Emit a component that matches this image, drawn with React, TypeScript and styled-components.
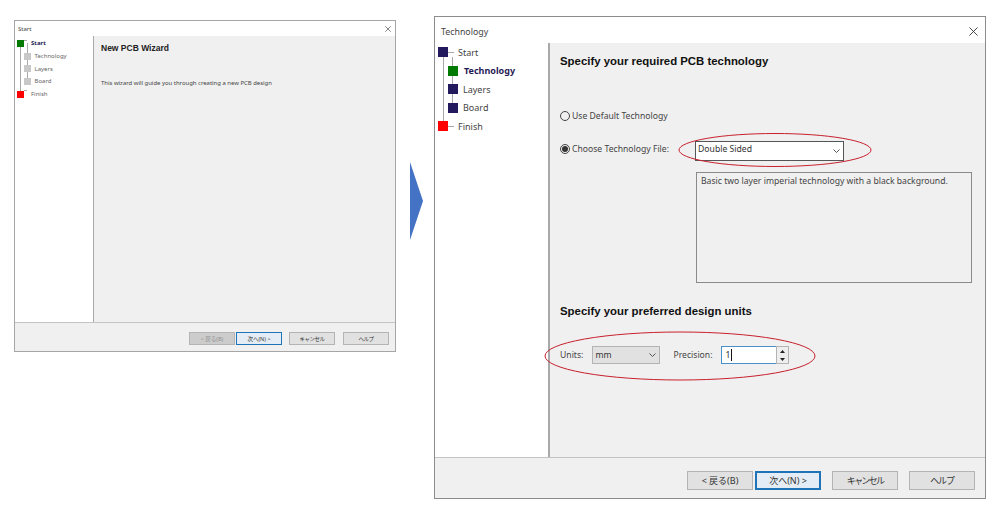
import React from "react";
import styled, { createGlobalStyle } from "styled-components";

const Global = createGlobalStyle`
  html, body { margin: 0; padding: 0; background: #fff; }
  body { font-family: "Noto Sans", "Noto Sans CJK JP", sans-serif; color: #222; }
  #root { width: 1002px; height: 517px; overflow: hidden; }
`;

const Page = styled.div`
  display: flex;
  align-items: flex-start;
  padding: 16px 0 0 14px;
  width: 1002px;
  height: 517px;
  box-sizing: border-box;
`;

const Window = styled.div<{ $w: number; $h: number; $mt: number; $ml: number; $color: string }>`
  position: relative;
  display: flex;
  flex-direction: column;
  flex: none;
  box-sizing: border-box;
  width: ${(p) => p.$w}px;
  height: ${(p) => p.$h}px;
  margin-top: ${(p) => p.$mt}px;
  margin-left: ${(p) => p.$ml}px;
  border: 1px solid ${(p) => p.$color};
  background: #fff;
`;

const TitleBar = styled.div<{ $h: number; $size: number; $pl: number; $pr: number; $pt: number }>`
  flex: none;
  display: flex;
  align-items: center;
  justify-content: space-between;
  box-sizing: border-box;
  height: ${(p) => p.$h}px;
  padding: ${(p) => p.$pt}px ${(p) => p.$pr}px 0 ${(p) => p.$pl}px;
  font-size: ${(p) => p.$size}px;
  color: #444;
`;

const Body = styled.div`
  flex: 1;
  display: flex;
  min-height: 0;
`;

const Sidebar = styled.div<{ $w: number }>`
  flex: none;
  width: ${(p) => p.$w}px;
  background: #fff;
`;

const Tree = styled.div<{ $pl: number; $pt: number }>`
  position: relative;
  display: flex;
  flex-direction: column;
  padding: ${(p) => p.$pt}px 0 0 ${(p) => p.$pl}px;
`;

const TreeLines = styled.svg`
  position: absolute;
  left: 0;
  top: 0;
  pointer-events: none;
`;

const TreeRow = styled.div<{ $h: number; $indent: number; $gap: number; $size: number }>`
  position: relative;
  display: flex;
  align-items: center;
  height: ${(p) => p.$h}px;
  padding-left: ${(p) => p.$indent}px;
  gap: ${(p) => p.$gap}px;
  font-size: ${(p) => p.$size}px;
`;

const Square = styled.span<{ $s: number; $c: string }>`
  flex: none;
  width: ${(p) => p.$s}px;
  height: ${(p) => p.$s}px;
  background: ${(p) => p.$c};
`;

const Label = styled.span<{ $active?: boolean; $color: string }>`
  color: ${(p) => (p.$active ? "#1f1a55" : p.$color)};
  font-weight: ${(p) => (p.$active ? 700 : 400)};
  white-space: nowrap;
`;

const Panel = styled.div<{ $divider: number }>`
  flex: 1;
  position: relative;
  display: flex;
  flex-direction: column;
  background: #f0f0f0;
  border-left: ${(p) => p.$divider}px solid #a9a9a9;
  min-width: 0;
`;

const Footer = styled.div<{ $h: number; $pr: number; $pt: number; $gap: number }>`
  flex: none;
  display: flex;
  justify-content: flex-end;
  align-items: flex-start;
  box-sizing: border-box;
  height: ${(p) => p.$h}px;
  padding: ${(p) => p.$pt}px ${(p) => p.$pr}px 0 0;
  gap: ${(p) => p.$gap}px;
  background: #f0f0f0;
  border-top: 1px solid #c4c4c4;
`;

const Btn = styled.div<{
  $w: number;
  $h: number;
  $size: number;
  $primary?: number;
  $disabled?: boolean;
  $ml?: number;
  $ls?: number;
}>`
  display: flex;
  align-items: center;
  justify-content: center;
  box-sizing: border-box;
  width: ${(p) => p.$w}px;
  height: ${(p) => p.$h}px;
  margin-left: ${(p) => p.$ml ?? 0}px;
  font-size: ${(p) => p.$size}px;
  letter-spacing: ${(p) => p.$ls ?? 0}px;
  white-space: nowrap;
  color: ${(p) => (p.$disabled ? "#8f8f8f" : "#333")};
  background: ${(p) => (p.$disabled ? "#cccccc" : p.$primary ? "#e4edf5" : "#e1e1e1")};
  border: ${(p) => (p.$primary ? `${p.$primary}px solid #1f74b8` : "1px solid #b4b4b4")};
`;

const SmallContent = styled.div`
  flex: 1;
  padding: 7px 0 0 7px;
`;

const SmallHeading = styled.div`
  font-family: "Liberation Sans", sans-serif;
  font-size: 8.5px;
  font-weight: 700;
  line-height: 10px;
  color: #222;
`;

const SmallText = styled.div`
  margin-top: 26px;
  font-size: 5.95px;
  line-height: 8px;
  color: #444;
`;

const BigContent = styled.div`
  flex: 1;
  display: flex;
  flex-direction: column;
  padding: 11px 0 0 10px;
`;

const Heading = styled.div<{ $mt?: number }>`
  font-family: "Liberation Sans", sans-serif;
  font-size: 11.4px;
  font-weight: 700;
  line-height: 15px;
  color: #111;
  margin-top: ${(p) => p.$mt ?? 0}px;
`;

const RadioRow = styled.div<{ $mt: number }>`
  display: flex;
  align-items: center;
  height: 20px;
  margin-top: ${(p) => p.$mt}px;
  font-size: 8.65px;
  color: #444;
`;

const Radio = styled.span<{ $on?: boolean }>`
  flex: none;
  display: flex;
  align-items: center;
  justify-content: center;
  box-sizing: border-box;
  width: 10px;
  height: 10px;
  margin-right: 2px;
  border: 1px solid #444;
  border-radius: 50%;
  &::after {
    content: "";
    display: ${(p) => (p.$on ? "block" : "none")};
    width: 6px;
    height: 6px;
    border-radius: 50%;
    background: #333;
  }
`;

const Combo = styled.div<{ $w: number; $h: number; $ml: number; $mt?: number; $bg: string; $border: string }>`
  display: flex;
  align-items: center;
  justify-content: space-between;
  box-sizing: border-box;
  width: ${(p) => p.$w}px;
  height: ${(p) => p.$h}px;
  margin-left: ${(p) => p.$ml}px;
  margin-top: ${(p) => p.$mt ?? 0}px;
  padding: 0 3px 0 2px;
  background: ${(p) => p.$bg};
  border: 1px solid ${(p) => p.$border};
  font-size: 8.65px;
  color: #333;
`;

const ComboText = styled.span<{ $pb?: number }>`
  padding-bottom: ${(p) => p.$pb ?? 0}px;
`;

const DescBox = styled.div`
  box-sizing: border-box;
  width: 276px;
  height: 111px;
  margin: 13px 0 0 136px;
  padding: 1px 4px;
  border: 1px solid #8a8a8a;
  font-size: 8.65px;
  line-height: 14px;
  color: #444;
`;

const UnitsRow = styled.div`
  display: flex;
  align-items: center;
  height: 18px;
  margin-top: 27px;
  font-size: 8.65px;
  color: #444;
`;

const PrecisionLabel = styled.span`
  margin-left: 13px;
`;

const SpinInput = styled.div`
  display: flex;
  align-items: center;
  box-sizing: border-box;
  width: 56px;
  height: 18px;
  margin-left: 9px;
  padding-left: 3px;
  background: #fff;
  border: 1px solid #4a90c8;
  color: #333;
  font-size: 8.65px;
`;

const Caret = styled.span`
  display: inline-block;
  width: 1px;
  height: 12px;
  background: #111;
  margin-left: 1px;
`;

const Spinner = styled.div`
  display: flex;
  flex-direction: column;
  flex: none;
  width: 13px;
  height: 18px;
  margin-left: -1px;
  border: 1px solid #b4b4b4;
  box-sizing: border-box;
  background: #eee;
`;

const SpinPart = styled.div`
  flex: 1;
  display: flex;
  align-items: center;
  justify-content: center;
`;

const ArrowShape = styled.svg`
  flex: none;
  margin: 146px 0 0 14px;
`;

const Ellipses = styled.svg`
  position: absolute;
  left: 0;
  top: 0;
  pointer-events: none;
`;

const Chevron = () => (
  <svg width="7" height="4" viewBox="0 0 7 4">
    <path d="M0.5 0.5L3.5 3.5L6.5 0.5" fill="none" stroke="#555" strokeWidth="1" />
  </svg>
);

const CloseIcon = ({ s }: { s: number }) => (
  <svg width={s} height={s} viewBox="0 0 10 10">
    <path d="M0.5 0.5L9.5 9.5M9.5 0.5L0.5 9.5" fill="none" stroke="#333" strokeWidth="1" />
  </svg>
);

type TreeProps = {
  active: number;
  colors: string;
  textColor: string;
  s: number;
  rowH: number;
  indent: number;
  gap: number;
  childGap: number;
  size: number;
  pl: number;
  pt: number;
  activeColor: string;
  lines: string;
  w: number;
  h: number;
  activeGap: number;
};

const items = ["Start", "Technology", "Layers", "Board", "Finish"];

const Steps = (t: TreeProps) => (
  <Tree $pl={t.pl} $pt={t.pt}>
    <TreeLines width={t.w} height={t.h}>
      <path d={t.lines} fill="none" stroke="#a8a8a8" strokeWidth="1" />
    </TreeLines>
    {items.map((name, i) => {
      const child = i >= 1 && i <= 3;
      const isActive = i === t.active;
      const c = i === 4 ? "#ff0000" : isActive ? t.activeColor : t.colors;
      return (
        <TreeRow
          key={name}
          $h={t.rowH}
          $indent={child ? t.indent : 0}
          $gap={isActive ? t.activeGap : child ? t.childGap : t.gap}
          $size={t.size}
        >
          <Square $s={t.s} $c={c} />
          <Label $active={isActive} $color={t.textColor}>{name}</Label>
        </TreeRow>
      );
    })}
  </Tree>
);

export default function App() {
  return (
    <Page>
      <Global />
      <Window $w={382} $h={332} $mt={4} $ml={0} $color="#a6a6a6">
        <TitleBar $h={15} $size={6} $pl={3} $pr={4} $pt={0}>
          <span>Start</span>
          <CloseIcon s={6} />
        </TitleBar>
        <Body>
          <Sidebar $w={78}>
            <Steps
              active={0}
              colors="#c8c8c8"
              activeColor="#007a00"
              textColor="#666"
              s={7}
              rowH={12.7}
              indent={7}
              gap={7}
              childGap={3.5}
              activeGap={7}
              size={6}
              pl={2}
              pt={1}
              lines="M5.5 7V55M12.5 7V43M9 4.5H12M9 54.5H12"
              w={78}
              h={70}
            />
          </Sidebar>
          <Panel $divider={1}>
            <SmallContent>
              <SmallHeading>New PCB Wizard</SmallHeading>
              <SmallText>This wizard will guide you through creating a new PCB design</SmallText>
            </SmallContent>
          </Panel>
        </Body>
        <Footer $h={29} $pr={6} $pt={9} $gap={1}>
          <Btn $w={46} $h={13} $size={5.5} $disabled>&lt; 戻る(B)</Btn>
          <Btn $w={46} $h={13} $size={5.5} $primary={1}>次へ(N) &gt;</Btn>
          <Btn $w={46} $h={13} $size={5.5} $ml={6} $ls={-0.5}>キャンセル</Btn>
          <Btn $w={46} $h={13} $size={5.5} $ml={7} $ls={-0.5}>ヘルプ</Btn>
        </Footer>
      </Window>

      <ArrowShape width="14" height="78" viewBox="0 0 14 78">
        <polygon points="0,0 13,39 0,78" fill="#4472c4" />
      </ArrowShape>

      <Window $w={552} $h={483} $mt={0} $ml={10} $color="#8c8c8c">
        <TitleBar $h={26} $size={8.8} $pl={6} $pr={7} $pt={3}>
          <span>Technology</span>
          <CloseIcon s={9} />
        </TitleBar>
        <Body>
          <Sidebar $w={113}>
            <Steps
              active={1}
              colors="#221a5c"
              activeColor="#007a00"
              textColor="#444"
              s={10}
              rowH={18.5}
              indent={10}
              gap={10}
              childGap={5}
              activeGap={6}
              size={9}
              pl={3}
              pt={0}
              lines="M8.5 14V84M17.5 14V65M13 9.5H19M13 83.5H19"
              w={113}
              h={100}
            />
          </Sidebar>
          <Panel $divider={2}>
            <BigContent>
              <Heading>Specify your required PCB technology</Heading>
              <RadioRow $mt={37}><Radio />Use Default Technology</RadioRow>
              <RadioRow $mt={13}>
                <Radio $on />
                <span>Choose Technology File:</span>
                <Combo $w={149} $h={20} $ml={26} $mt={4} $bg="#ffffff" $border="#555">
                  <ComboText $pb={5}>Double Sided</ComboText>
                  <Chevron />
                </Combo>
              </RadioRow>
              <DescBox>Basic two layer imperial technology with a black background.</DescBox>
              <Heading $mt={21}>Specify your preferred design units</Heading>
              <UnitsRow>
                <span>Units:</span>
                <Combo $w={68} $h={18} $ml={9} $bg="#e1e1e1" $border="#b4b4b4">
                  <ComboText>mm</ComboText>
                  <Chevron />
                </Combo>
                <PrecisionLabel>Precision:</PrecisionLabel>
                <SpinInput>1<Caret /></SpinInput>
                <Spinner>
                  <SpinPart>
                    <svg width="5" height="3" viewBox="0 0 5 3"><polygon points="2.5,0 5,3 0,3" fill="#222" /></svg>
                  </SpinPart>
                  <SpinPart>
                    <svg width="5" height="3" viewBox="0 0 5 3"><polygon points="0,0 5,0 2.5,3" fill="#222" /></svg>
                  </SpinPart>
                </Spinner>
              </UnitsRow>
            </BigContent>
          </Panel>
        </Body>
        <Footer $h={41} $pr={10} $pt={13} $gap={2}>
          <Btn $w={66} $h={19} $size={9}>&lt; 戻る(B)</Btn>
          <Btn $w={66} $h={19} $size={9} $primary={2}>次へ(N) &gt;</Btn>
          <Btn $w={66} $h={19} $size={9} $ml={9} $ls={-1.7}>キャンセル</Btn>
          <Btn $w={66} $h={19} $size={9} $ml={9} $ls={-1.2}>ヘルプ</Btn>
        </Footer>
        <Ellipses width="552" height="483">
          <ellipse cx="340" cy="133" rx="96" ry="16.5" fill="none" stroke="#c8202c" strokeWidth="1" />
          <ellipse cx="245" cy="339" rx="135" ry="24" fill="none" stroke="#c8202c" strokeWidth="1" />
        </Ellipses>
      </Window>
    </Page>
  );
}
